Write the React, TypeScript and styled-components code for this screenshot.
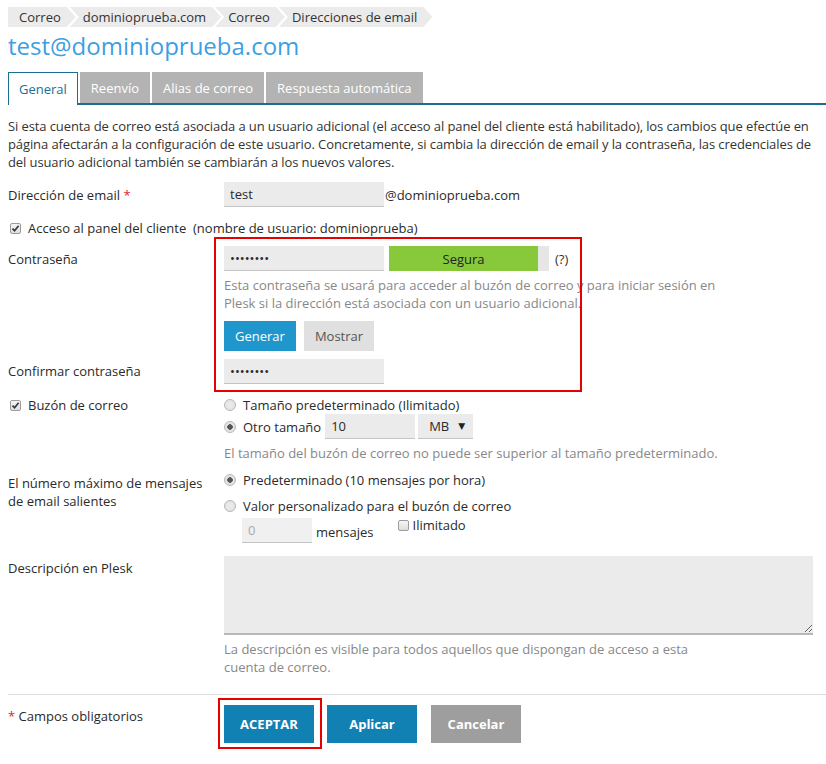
import React from "react";
import styled, { createGlobalStyle } from "styled-components";

const GlobalStyle = createGlobalStyle`
  html, body {
    margin: 0;
    padding: 0;
    background: #fff;
    overflow: hidden;
  }
  body {
    font-family: "Open Sans", "DejaVu Sans", sans-serif;
    font-size: 13px;
    line-height: 18px;
    color: #2a2a2a;
  }
`;

const Page = styled.div`
  width: 826px;
  height: 764px;
  overflow: hidden;
  box-sizing: border-box;
  padding: 7px 0 0 8px;
`;

/* breadcrumbs */
const Crumbs = styled.nav`
  display: flex;
  height: 20px;
`;

const Crumb = styled.span<{ $first?: boolean }>`
  display: flex;
  align-items: center;
  height: 20px;
  background: #ebebeb;
  color: #333;
  padding: 0 15px 0 ${(p) => (p.$first ? 11 : 13)}px;
  margin-left: ${(p) => (p.$first ? 0 : -6)}px;
  clip-path: polygon(
    0 0,
    calc(100% - 9px) 0,
    100% 50%,
    calc(100% - 9px) 100%,
    0 100%,
    ${(p) => (p.$first ? "0 50%" : "9px 50%")}
  );
`;

const Title = styled.h1`
  margin: 3px 0 0;
  font-size: 24px;
  line-height: 32px;
  font-weight: 400;
  color: #3d9fe2;
`;

/* tabs */
const Tabs = styled.div`
  display: flex;
  gap: 2px;
  margin-top: 10px;
  height: 31px;
  border-bottom: 2px solid #1a6e93;
  width: 900px;
`;

const Tab = styled.div<{ $active?: boolean }>`
  display: flex;
  align-items: center;
  padding: 0 ${(p) => (p.$active ? 10 : 11)}px;
  box-sizing: border-box;
  background: ${(p) => (p.$active ? "#fff" : "#b3b3b3")};
  color: ${(p) => (p.$active ? "#1b6f95" : "#fff")};
  border: ${(p) => (p.$active ? "1px solid #1a6e93" : "none")};
  border-bottom: none;
  height: ${(p) => (p.$active ? "33px" : "31px")};
  margin-bottom: ${(p) => (p.$active ? "-2px" : "0")};
`;

const Intro = styled.p`
  margin: 12px 0 0;
  white-space: nowrap;
  color: #333;
  letter-spacing: -0.1px;
`;

/* form */
const Form = styled.div`
  margin-top: 11px;
  display: flex;
  flex-direction: column;
`;

const Row = styled.div<{ $gap?: number }>`
  display: grid;
  grid-template-columns: 216px 1fr;
  margin-top: ${(p) => p.$gap ?? 0}px;
`;

const Label = styled.div<{ $pad?: number }>`
  padding-top: ${(p) => p.$pad ?? 4}px;
`;

const Req = styled.span`
  color: #e02424;
`;

const Field = styled.div`
  display: flex;
  flex-direction: column;
  align-items: flex-start;
`;

const Line = styled.div<{ $gap?: number; $align?: string; $indent?: number }>`
  display: flex;
  align-items: ${(p) => p.$align ?? "center"};
  margin-top: ${(p) => p.$gap ?? 0}px;
  padding-left: ${(p) => p.$indent ?? 0}px;
`;

const TextInput = styled.input<{ $w?: number; $muted?: boolean; $ml?: number }>`
  width: ${(p) => p.$w ?? 160}px;
  height: 25px;
  box-sizing: border-box;
  margin: 0 0 0 ${(p) => p.$ml ?? 0}px;
  border: none;
  border-bottom: 1px solid #c4c4c4;
  background: ${(p) => (p.$muted ? "#f0f0f0" : "#ebebeb")};
  padding: 0 6px;
  font-family: inherit;
  font-size: 13px;
  color: ${(p) => (p.$muted ? "#aaa" : "#2a2a2a")};
  outline: none;
`;

const Suffix = styled.span`
  margin-left: 1px;
`;

const Strength = styled.div`
  display: flex;
  margin-left: 5px;
  width: 160px;
  height: 25px;
  background: #e6e6e6;
`;

const StrengthFill = styled.div`
  width: 149px;
  display: flex;
  align-items: center;
  justify-content: center;
  background: #88c93b;
  color: #222;
`;

const Hint = styled.span`
  margin-left: 6px;
  color: #333;
`;

const Help = styled.div<{ $gap?: number }>`
  margin-top: ${(p) => p.$gap ?? 5}px;
  color: #888;
`;

const Btn = styled.button<{ $tone: "blue" | "light" }>`
  height: 30px;
  padding: 0 11px;
  border: none;
  font-family: inherit;
  font-size: 13px;
  background: ${(p) => (p.$tone === "blue" ? "#1f97cd" : "#e0e0e0")};
  color: ${(p) => (p.$tone === "blue" ? "#fff" : "#555")};
  margin-right: 8px;
`;

const PassGroup = styled.div`
  position: relative;
  margin-top: 9px;
  display: flex;
  flex-direction: column;
`;

const RedFrame = styled.div`
  position: absolute;
  left: 206px;
  top: -9px;
  width: 368px;
  bottom: -8px;
  border: 2px solid #e60000;
  box-sizing: border-box;
  pointer-events: none;
`;

const CheckRow = styled.label`
  display: flex;
  align-items: center;
  gap: 7px;
  padding-left: 2px;
`;

const Box = styled.span`
  width: 11px;
  height: 11px;
  box-sizing: border-box;
  border: 1px solid #9c9c9c;
  border-radius: 2px;
  background: linear-gradient(#f6f6f6, #dedede);
  display: inline-flex;
  align-items: center;
  justify-content: center;
  flex: none;
`;

const Check = ({ checked }: { checked?: boolean }) => (
  <Box>
    {checked && (
      <svg width="9" height="9" viewBox="0 0 9 9">
        <path d="M1.5 4.6 L3.6 6.7 L7.6 1.8" fill="none" stroke="#3a3a3a" strokeWidth="1.7" />
      </svg>
    )}
  </Box>
);

const RadioLine = styled.div<{ $h?: number; $gap?: number }>`
  display: flex;
  align-items: center;
  height: ${(p) => p.$h ?? 18}px;
  margin-top: ${(p) => p.$gap ?? 0}px;
`;

const Dot = styled.span<{ $on?: boolean }>`
  width: 12px;
  height: 12px;
  box-sizing: border-box;
  border-radius: 50%;
  border: 1px solid #b8b8b8;
  background: radial-gradient(circle, ${(p) => (p.$on ? "#555 0 2.5px, #e4e4e4 3px" : "#ececec 0, #e0e0e0 100%")});
  margin-right: 7px;
  flex: none;
`;

const Select = styled.div`
  display: flex;
  align-items: center;
  justify-content: space-between;
  width: 55px;
  height: 25px;
  box-sizing: border-box;
  margin-left: 3px;
  padding: 0 8px 0 11px;
  background: #ebebeb;
  border-bottom: 1px solid #c4c4c4;
  font-size: 13px;
`;

const Caret = styled.span`
  font-size: 9px;
  color: #222;
`;

const Units = styled.span`
  margin: 5px 0 0 4px;
`;

const Unlimited = styled.label`
  display: flex;
  align-items: center;
  gap: 4px;
  margin-left: 24px;
  height: 14px;
`;

const Area = styled.textarea`
  width: 589px;
  height: 79px;
  box-sizing: border-box;
  border: none;
  border-bottom: 2px solid #b8b8b8;
  background: #ebebeb;
  font-family: inherit;
  display: block;
  outline: none;
`;

const Divider = styled.hr`
  margin: 18px 0 0;
  border: none;
  border-top: 1px solid #dcdcdc;
  width: 830px;
`;

const Footer = styled.div`
  display: grid;
  grid-template-columns: 216px 1fr;
  margin-top: 10px;
`;

const Actions = styled.div`
  display: flex;
  gap: 13px;
`;

const ActionBtn = styled.button<{ $grey?: boolean }>`
  position: relative;
  width: 90px;
  height: 38px;
  border: none;
  font-family: inherit;
  font-size: 13px;
  font-weight: 700;
  color: #fff;
  background: ${(p) => (p.$grey ? "#9e9e9e" : "#1181b3")};
  margin-left: ${(p) => (p.$grey ? 1 : 0)}px;
`;

const ButtonFrame = styled.span`
  position: absolute;
  left: -6px;
  top: -7px;
  right: -8px;
  bottom: -6px;
  border: 2px solid #e60000;
`;

export default function App() {
  return (
    <Page>
      <GlobalStyle />
      <Crumbs>
        <Crumb $first>Correo</Crumb>
        <Crumb>dominioprueba.com</Crumb>
        <Crumb>Correo</Crumb>
        <Crumb>Direcciones de email</Crumb>
      </Crumbs>
      <Title>test@dominioprueba.com</Title>
      <Tabs>
        <Tab $active>General</Tab>
        <Tab>Reenvío</Tab>
        <Tab>Alias de correo</Tab>
        <Tab>Respuesta automática</Tab>
      </Tabs>
      <Intro>
        Si esta cuenta de correo está asociada a un usuario adicional (el acceso al panel del cliente está habilitado), los cambios que efectúe en
        <br />
        página afectarán a la configuración de este usuario. Concretamente, si cambia la dirección de email y la contraseña, las credenciales de
        <br />
        del usuario adicional también se cambiarán a los nuevos valores.
      </Intro>

      <Form>
        <Row>
          <Label>
            Dirección de email <Req>*</Req>
          </Label>
          <Line>
            <TextInput defaultValue="test" readOnly />
            <Suffix>@dominioprueba.com</Suffix>
          </Line>
        </Row>

        <Line $gap={12}>
          <CheckRow>
            <Check checked />
            <span>Acceso al panel del cliente&nbsp; (nombre de usuario: dominioprueba)</span>
          </CheckRow>
        </Line>

        <PassGroup>
          <Row>
            <Label>Contraseña</Label>
            <Field>
              <Line>
                <TextInput type="password" defaultValue="password" readOnly />
                <Strength>
                  <StrengthFill>Segura</StrengthFill>
                </Strength>
                <Hint>(?)</Hint>
              </Line>
              <Help>
                Esta contraseña se usará para acceder al buzón de correo y para iniciar sesión en
                <br />
                Plesk si la dirección está asociada con un usuario adicional.
              </Help>
              <Line $gap={9}>
                <Btn $tone="blue">Generar</Btn>
                <Btn $tone="light">Mostrar</Btn>
              </Line>
            </Field>
          </Row>
          <Row $gap={8}>
            <Label $pad={3}>Confirmar contraseña</Label>
            <Field>
              <TextInput type="password" defaultValue="password" readOnly />
            </Field>
          </Row>
          <RedFrame />
        </PassGroup>

        <Row $gap={12}>
          <Label $pad={0}>
            <CheckRow>
              <Check checked />
              <span>Buzón de correo</span>
            </CheckRow>
          </Label>
          <Field>
            <RadioLine>
              <Dot />
              Tamaño predeterminado (Ilimitado)
            </RadioLine>
            <RadioLine $h={25}>
              <Dot $on />
              Otro tamaño
              <TextInput $w={90} $ml={4} defaultValue="10" readOnly />
              <Select>
                MB <Caret>▼</Caret>
              </Select>
            </RadioLine>
            <Help>El tamaño del buzón de correo no puede ser superior al tamaño predeterminado.</Help>
          </Field>
        </Row>

        <Row $gap={9}>
          <Label $pad={3}>
            El número máximo de mensajes
            <br />
            de email salientes
          </Label>
          <Field>
            <RadioLine>
              <Dot $on />
              Predeterminado (10 mensajes por hora)
            </RadioLine>
            <RadioLine $gap={8}>
              <Dot />
              Valor personalizado para el buzón de correo
            </RadioLine>
            <Line $gap={3} $align="flex-start" $indent={18}>
              <TextInput $w={70} $muted defaultValue="0" readOnly />
              <Units>mensajes</Units>
              <Unlimited>
                <Check />
                <span>Ilimitado</span>
              </Unlimited>
            </Line>
          </Field>
        </Row>

        <Row $gap={13}>
          <Label $pad={3}>Descripción en Plesk</Label>
          <Field>
            <Area readOnly />
            <Help>
              La descripción es visible para todos aquellos que dispongan de acceso a esta
              <br />
              cuenta de correo.
            </Help>
          </Field>
        </Row>
      </Form>

      <Divider />

      <Footer>
        <Label $pad={2}>
          <Req>*</Req> Campos obligatorios
        </Label>
        <Actions>
          <ActionBtn>
            ACEPTAR
            <ButtonFrame />
          </ActionBtn>
          <ActionBtn>Aplicar</ActionBtn>
          <ActionBtn $grey>Cancelar</ActionBtn>
        </Actions>
      </Footer>
    </Page>
  );
}
